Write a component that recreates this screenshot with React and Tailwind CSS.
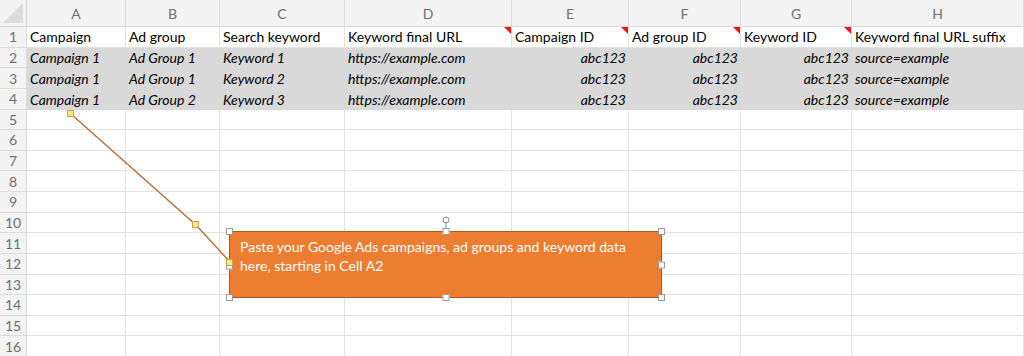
import React from "react";

const cols = ["A", "B", "C", "D", "E", "F", "G", "H"];

const header = [
  { text: "Campaign" },
  { text: "Ad group" },
  { text: "Search keyword" },
  { text: "Keyword final URL", flag: true },
  { text: "Campaign ID", flag: true },
  { text: "Ad group ID", flag: true },
  { text: "Keyword ID", flag: true },
  { text: "Keyword final URL suffix" },
];

const data = [
  ["Campaign 1", "Ad Group 1", "Keyword 1", "https://example.com", "abc123", "abc123", "abc123", "source=example"],
  ["Campaign 1", "Ad Group 1", "Keyword 2", "https://example.com", "abc123", "abc123", "abc123", "source=example"],
  ["Campaign 1", "Ad Group 2", "Keyword 3", "https://example.com", "abc123", "abc123", "abc123", "source=example"],
];

// id columns are right aligned
const rightCols = [4, 5, 6];

const Handle = ({ className }) => (
  <div className={`absolute w-[7px] h-[7px] bg-white border border-[#9a9a9a] ${className}`} />
);

const Knot = ({ className }) => (
  <div className={`absolute w-[7px] h-[7px] bg-[#fde58a] border border-[#c9a24a] ${className}`} />
);

export default function App() {
  const rows = [];
  for (let r = 1; r <= 16; r++) rows.push(r);

  return (
    <div
      className="relative w-[1024px] h-[356px] overflow-hidden bg-white text-[14px] text-black"
      style={{ fontFamily: "Lato, 'Open Sans', sans-serif" }}
    >
      <div className="grid grid-cols-[27px_99px_94px_125px_167px_117px_112px_111px_172px] grid-rows-[27px_repeat(16,20.625px)]">
        {/* corner */}
        <div className="relative bg-[#f3f3f3] border-r border-b border-[#d6d6d6] overflow-hidden">
          <div className="absolute right-[3px] bottom-[3px] w-0 h-0 border-l-[20px] border-l-transparent border-b-[20px] border-b-[#dcdcdc]" />
        </div>
        {cols.map((c) => (
          <div
            key={c}
            className="flex items-center justify-center bg-[#f3f3f3] border-r border-b border-[#d9d9d9] text-[#6f6f6f] text-[14px]"
          >
            {c}
          </div>
        ))}

        {rows.map((r) => (
          <React.Fragment key={r}>
            <div className="flex items-center justify-center bg-[#f3f3f3] border-r border-b border-[#dcdcdc] text-[#6f6f6f] text-[14px]">
              {r}
            </div>
            {cols.map((c, i) => {
              if (r === 1) {
                const h = header[i];
                return (
                  <div key={c} className="relative flex items-center px-[3px] border-r border-b border-[#e2e2e2] whitespace-nowrap overflow-hidden">
                    {h.text}
                    {h.flag && (
                      <div className="absolute top-0 right-0 w-0 h-0 border-l-[7px] border-l-transparent border-t-[7px] border-t-[#f01414]" />
                    )}
                  </div>
                );
              }
              if (r >= 2 && r <= 4) {
                const v = data[r - 2][i];
                return (
                  <div
                    key={c}
                    className={`flex items-center px-[3px] bg-[#d9d9d9] italic whitespace-nowrap overflow-hidden ${
                      rightCols.includes(i) ? "justify-end" : ""
                    }`}
                  >
                    {v}
                  </div>
                );
              }
              return <div key={c} className="border-r border-b border-[#e2e2e2]" />;
            })}
          </React.Fragment>
        ))}
      </div>

      {/* connector line of the callout */}
      <svg className="absolute left-0 top-0" width="1024" height="356">
        <polyline points="71,114 196,225 230,262" fill="none" stroke="#c0652a" strokeWidth="1.3" />
        <line x1="446" y1="222" x2="446" y2="231" stroke="#8a8a8a" strokeWidth="1" />
        <circle cx="446" cy="220" r="3" fill="white" stroke="#8a8a8a" strokeWidth="1" />
      </svg>

      {/* callout shape, selected */}
      <div className="absolute left-[229px] top-[231px] w-[433px] h-[67px] bg-[#ed7d31] border border-[#a95a22] px-[10px] pt-[6px] text-white text-[14px] leading-[18.5px]">
        Paste your Google Ads campaigns, ad groups and keyword data
        <br />
        here, starting in Cell A2
        <Handle className="-left-[4px] -top-[4px]" />
        <Handle className="left-1/2 -translate-x-1/2 -top-[4px]" />
        <Handle className="-right-[4px] -top-[4px]" />
        <Handle className="-left-[4px] top-1/2 -translate-y-1/2 mt-[1px]" />
        <Handle className="-right-[4px] top-1/2 -translate-y-1/2" />
        <Handle className="-left-[4px] -bottom-[4px]" />
        <Handle className="left-1/2 -translate-x-1/2 -bottom-[4px]" />
        <Handle className="-right-[4px] -bottom-[4px]" />
        <Knot className="-left-[4px] top-[27px]" />
      </div>

      <Knot className="left-[67px] top-[110px]" />
      <Knot className="left-[192px] top-[221px]" />
    </div>
  );
}
